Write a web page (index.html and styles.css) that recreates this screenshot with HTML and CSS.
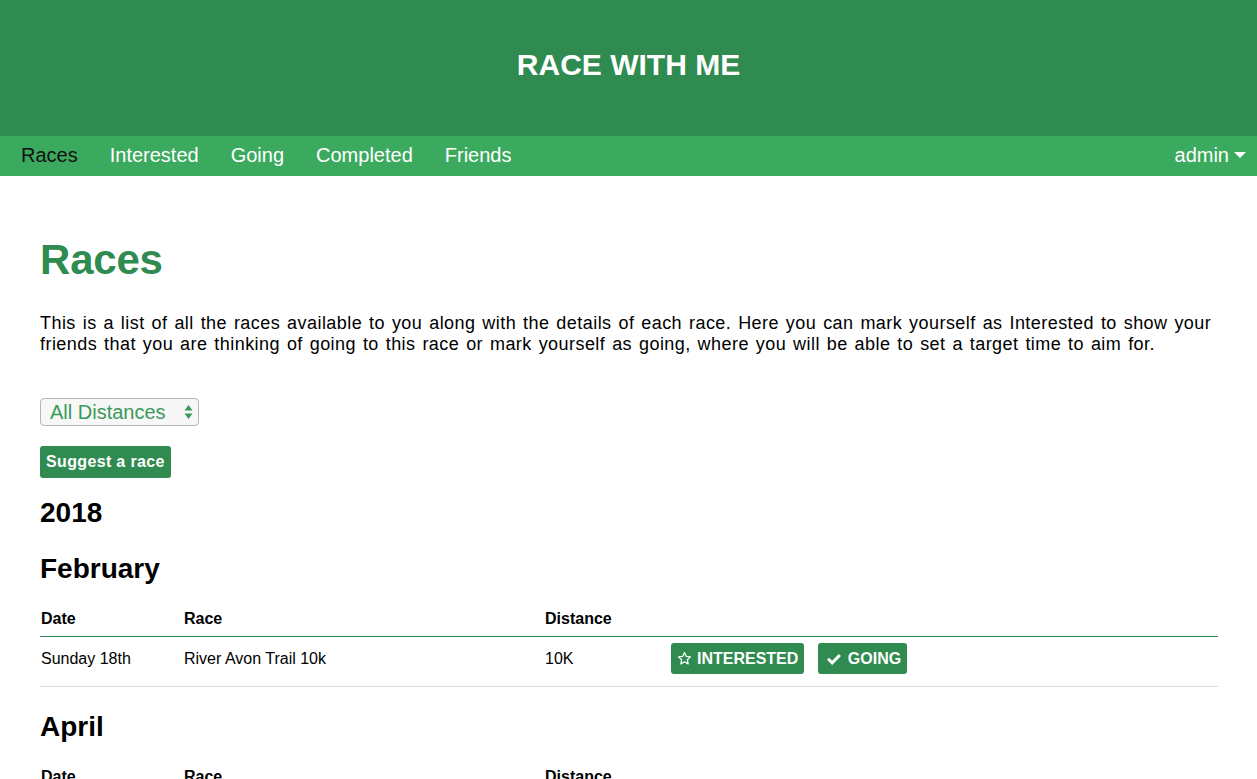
FILE: index.html
```html
<!DOCTYPE html>
<html>
<head>
<meta charset="utf-8">
<link rel="stylesheet" href="styles.css">
</head>
<body>
<header class="banner"><h1 class="brand">RACE WITH ME</h1></header>
<nav class="navbar">
  <ul class="nav-links">
    <li class="active">Races</li>
    <li>Interested</li>
    <li>Going</li>
    <li>Completed</li>
    <li>Friends</li>
  </ul>
  <div class="user">admin <span class="caret"></span></div>
</nav>
<main class="content">
  <h1 class="page-title">Races</h1>
  <p class="intro">This is a list of all the races available to you along with the details of each race. Here you can mark yourself as Interested to show your friends that you are thinking of going to this race or mark yourself as going, where you will be able to set a target time to aim for.</p>
  <div class="select">
    <span>All Distances</span>
    <svg class="arrows" width="9" height="16" viewBox="0 0 9 16"><path d="M4.5 1 L8.5 6.5 L0.5 6.5 Z M4.5 15 L8.5 9.5 L0.5 9.5 Z" fill="#3a9a5a"/></svg>
  </div>
  <div><span class="btn-suggest">Suggest a race</span></div>
  <h2 class="year">2018</h2>
  <h2 class="month">February</h2>
  <table class="races">
    <thead><tr><th class="c-date">Date</th><th class="c-race">Race</th><th class="c-dist">Distance</th><th></th></tr></thead>
    <tbody>
      <tr>
        <td>Sunday 18th</td><td>River Avon Trail 10k</td><td>10K</td>
        <td class="actions">
          <span class="tag"><svg width="15" height="15" viewBox="0 0 24 24"><path d="M12 2.5 L14.9 8.6 L21.5 9.4 L16.6 14 L17.9 20.6 L12 17.3 L6.1 20.6 L7.4 14 L2.5 9.4 L9.1 8.6 Z" fill="none" stroke="#fff" stroke-width="2" stroke-linejoin="round"/></svg>INTERESTED</span>
          <span class="tag tag-going"><svg width="16" height="15" viewBox="0 0 24 24"><path d="M2.5 12.5 L9 19 L21.5 6.5" fill="none" stroke="#fff" stroke-width="4.6"/></svg>GOING</span>
        </td>
      </tr>
    </tbody>
  </table>
  <h2 class="month">April</h2>
  <table class="races">
    <thead><tr><th class="c-date">Date</th><th class="c-race">Race</th><th class="c-dist">Distance</th><th></th></tr></thead>
  </table>
</main>
</body>
</html>
```
FILE: styles.css
```css
* { box-sizing: border-box; }
html, body { margin: 0; padding: 0; }
body { font-family: "Liberation Sans", Arial, sans-serif; color: #000; background: #fff; }
.banner { background: #2f8b4f; height: 136px; display: flex; align-items: center; justify-content: center; }
.brand { margin: 0; color: #fff; font-size: 30px; font-weight: bold; padding-bottom: 6px; }
.navbar { background: #3caa5e; height: 40px; display: flex; align-items: center; justify-content: space-between; padding: 0 11px 2px 5px; }
.nav-links { list-style: none; margin: 0; padding: 0; display: flex; }
.nav-links li { color: #fff; font-size: 20px; padding: 0 16px; }
.nav-links li.active { color: #111; }
.user { color: #fff; font-size: 20px; display: flex; align-items: center; }
.caret { display: inline-block; width: 0; height: 0; border-left: 6px solid transparent; border-right: 6px solid transparent; border-top: 6px solid #fff; margin-left: 5px; }
.content { padding: 0 39px 0 40px; }
.page-title { color: #2f8b4f; font-size: 42px; font-weight: bold; margin: 0; padding-top: 60px; line-height: 48px; letter-spacing: -0.2px; }
.intro { font-size: 18px; line-height: 21px; margin: 29px 0 0; letter-spacing: 0.45px; word-spacing: 1.45px; }
.select { margin-top: 43px; width: 159px; height: 28px; border: 1px solid #b5b5b5; border-radius: 4px; background: #f7f7f7; display: flex; align-items: center; justify-content: space-between; padding: 0 5px 0 9px; color: #3a9a5a; font-size: 20px; }
.btn-suggest { display: inline-block; margin-top: 20px; background: #2f8b4f; color: #fff; font-weight: bold; font-size: 16px; height: 32px; line-height: 32px; padding: 0 6px; border-radius: 3px; letter-spacing: 0.35px; }
.year { font-size: 28px; margin: 19px 0 0; line-height: 32px; }
.month { font-size: 28px; margin: 24px 0 0; line-height: 32px; }
.races { width: 100%; border-collapse: collapse; margin-top: 17px; }
.races th { text-align: left; font-size: 16px; font-weight: bold; padding: 8px 1px 8px; border-bottom: 1px solid #2f8b4f; }
.races td { font-size: 16px; padding: 2px 1px 8px; height: 50px; border-bottom: 1px solid #ddd; }
.c-date { width: 143px; }
.c-race { width: 361px; }
.c-dist { width: 126px; }
.actions { white-space: nowrap; }
.tag { display: inline-flex; align-items: center; gap: 5px; background: #2f8b4f; color: #fff; font-weight: bold; font-size: 16px; height: 31px; padding: 0 6px; border-radius: 3px; margin-right: 9px; }
.tag-going { padding: 0 6px 0 8px; gap: 6px; }
```
